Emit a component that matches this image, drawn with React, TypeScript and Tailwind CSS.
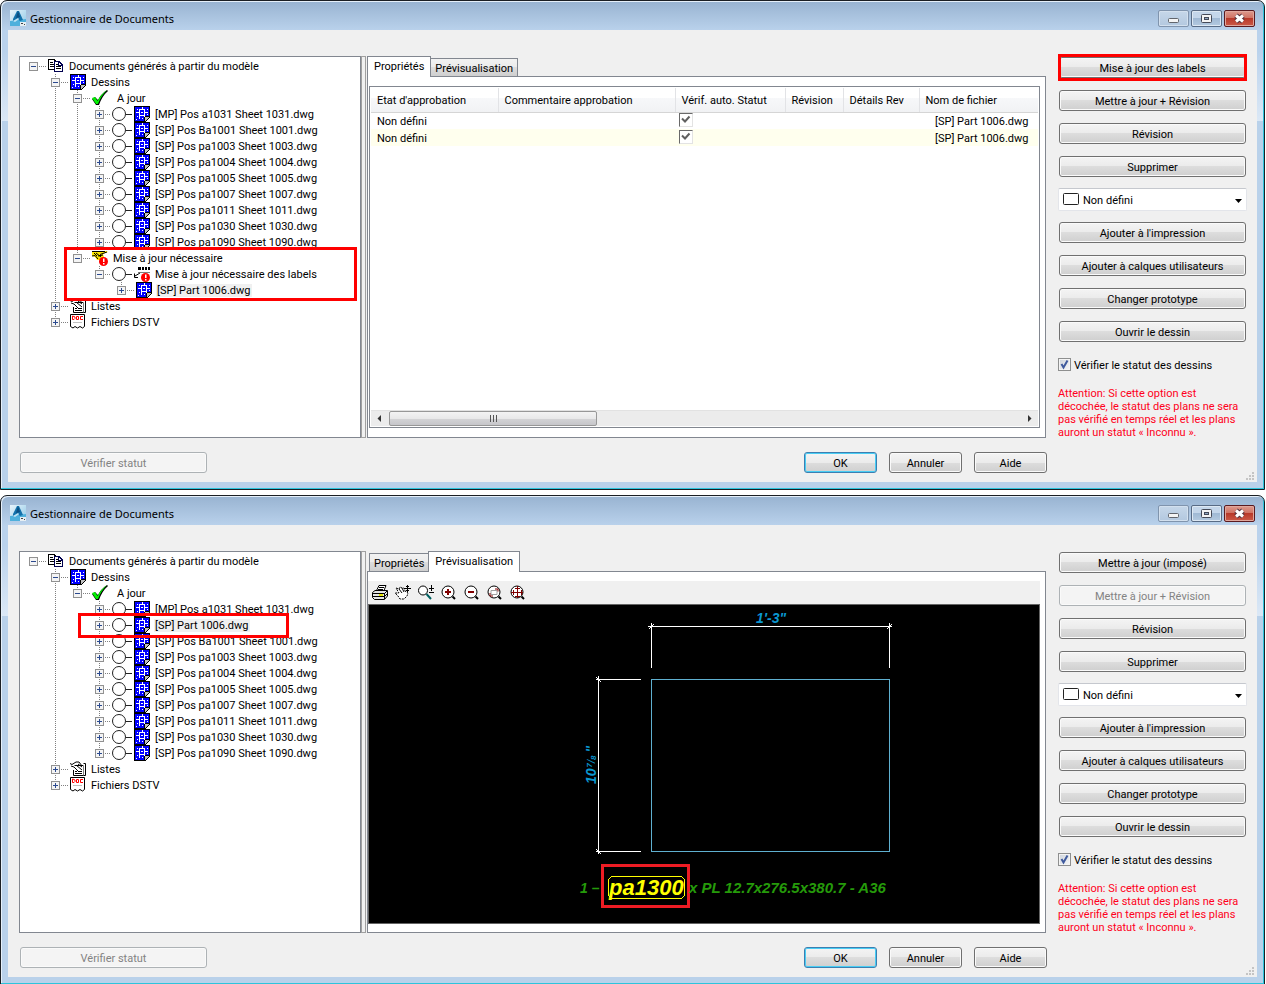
import React, { useState } from "react";

const buttonFace =
  "h-[21px] rounded-[3px] border border-[#707070] bg-[linear-gradient(#f4f4f4,#ebebeb_50%,#dddddd_50%,#cfcfcf)] pt-px text-center leading-[19px] shadow-[inset_0_0_0_1px_#fafafa] disabled:border-[#adb2b5] disabled:bg-none disabled:bg-[#f4f4f4] disabled:text-[#838383]";

/* ---------- icons ---------- */

const AppIcon = () => (
  <svg width="16" height="16" viewBox="0 0 16 16" className="shrink-0">
    <defs>
      <linearGradient id="appBg" x1="0" y1="0" x2="1" y2="1">
        <stop offset="0" stopColor="#e8f4fb" />
        <stop offset="1" stopColor="#8fc8e6" />
      </linearGradient>
    </defs>
    <rect width="16" height="16" fill="url(#appBg)" />
    <path d="M0 11 L16 9 V16 H0Z" fill="#4fb0dc" />
    <path d="M7 1 L9 1 L13 10 L10 11 L8 9 L3 11 L3 9Z" fill="#1272ac" />
    <path d="M8 1 L10 7 L6 8Z" fill="#0b4f82" />
    <path d="M3 11 L8 8 L9 9 L5 12Z" fill="#bfe3f4" />
    <rect x="10" y="12" width="6" height="4" fill="#e6eef3" />
    <path d="M11 13.5h2M14 14.5h1" stroke="#444" />
  </svg>
);

const DwgIcon = () => (
  <svg width="16" height="16" viewBox="0 0 16 16" shapeRendering="crispEdges" className="shrink-0">
    <path d="M0 0H16V11L11 16H0Z" fill="#000" />
    <path d="M1 1H15V10H10V15H1Z" fill="#0000ff" />
    <path d="M5.500 3.500H10.500V9.500H5.500ZM8.500 1V4M5.500 9V13M10.500 9V11M2 6.500H6M10 6.500H14" fill="none" stroke="#fff" />
    <path d="M7 6h2v1H7zM3 3h1v1H3zM13 3h1v1h-1zM3 10h1v1H3zM2 13h1v1H2zM8 12h1v1H8zM13 8h1v1h-1z" fill="#fff" />
    <path d="M11 11H15L11 15Z" fill="#c0c0c0" />
  </svg>
);

const DocsIcon = () => (
  <svg width="16" height="16" viewBox="0 0 16 16" shapeRendering="crispEdges" className="shrink-0">
    <path d="M.5 1.5H6L8.5 4V11.5H.5Z" fill="#fff" stroke="#000" />
    <path d="M2 4.5H5M2 6.5H6M2 8.5H6" stroke="#000" />
    <path d="M6.500 3.500H11L14.500 7V13.500H6.500Z" fill="#fff" stroke="#000050" />
    <path d="M10.500 4V7.500H14" fill="none" stroke="#000050" />
    <path d="M8 6.500H10M8 8.500H13M8 10.500H13" stroke="#000" />
  </svg>
);

const CheckIcon = () => (
  <svg width="20" height="16" viewBox="0 0 20 16" className="shrink-0">
    <path d="M0 9 L3 7 L6 10 Q9 4 15 0 L16 1 Q10 6 7 15 L4 15Z" fill="#000" />
    <path d="M0 8 L3 7 L5.500 11 Q9 4 15 0 Q9 6 6 14 L4 14Z" fill="#00f000" />
  </svg>
);

const NodeIcon = () => (
  <svg width="24" height="16" viewBox="0 0 24 16" className="shrink-0">
    <circle cx="9" cy="8" r="6.500" fill="#fff" stroke="#222" />
    <path d="M16 8.500H22" stroke="#222" />
  </svg>
);

const Alert = () => (
  <>
    <circle cx="11.500" cy="11.500" r="4.500" fill="#ff0000" />
    <path d="M11 8.500H12.500V12H11ZM11 13H12.500V14.500H11Z" fill="#fff" />
  </>
);

const HandAlertIcon = () => (
  <svg width="16" height="16" viewBox="0 0 16 16" className="shrink-0">
    <path d="M0 1H14L16 2L11 4L12 7L8 10H5L3 7L0 6Z" fill="#ffe800" />
    <path d="M0 1.500H13M15 2L8 4.500M0 6L3 5.500L6 9M4 3L9 7M6 6L11 5M2 3L5 6" fill="none" stroke="#000" />
    <Alert />
  </svg>
);

const LabelAlertIcon = () => (
  <svg width="16" height="16" viewBox="0 0 16 16" className="shrink-0">
    <path d="M4 1H7V4H4ZM8 1H10V4H8ZM11 1H13V4H11ZM14 1H16V4H14Z" fill="#000" />
    <path d="M4 6.500H16" stroke="#808080" />
    <path d="M6 7L1 10M0.500 7.500V11.500H4" fill="none" stroke="#000" />
    <Alert />
  </svg>
);

const ListIcon = () => (
  <svg width="16" height="16" viewBox="0 0 16 16" className="shrink-0">
    <path d="M4.500 4.500H13.500V14.500H3.500V9" fill="#fff" stroke="#000" />
    <path d="M13.500 2.500H15.500V14.500H13.500" fill="#fff" stroke="#000" />
    <path d="M0 2.500L2 3.500L6 1H9L12 5M1 5L4 6L9 11M6 4L12 9M8 3L12 6" fill="none" stroke="#000" />
    <path d="M5 10.500H7M5 12.500H12M9 10.500H12" stroke="#000" />
  </svg>
);

const DocIcon = () => (
  <svg width="16" height="16" viewBox="0 0 16 16" className="shrink-0">
    <path d="M.5 .5H14.500V12.500L12.500 14L10 12.500L7.500 14L5 12.500L3 14L.5 12.500Z" fill="#fff" stroke="#000" />
    <path d="M2.500 2V5.500H4L5 4.500V3L4 2.500ZM6.500 2.500H8.500V5.500H6.500ZM13 2.500H10.500V5.500H13" fill="none" stroke="#ff0000" />
    <path d="M3 8.500H12" stroke="#c0c0c0" />
  </svg>
);

const iconMap = {
  docs: DocsIcon,
  dwg: DwgIcon,
  check: CheckIcon,
  hand: HandAlertIcon,
  label: LabelAlertIcon,
  list: ListIcon,
  doc: DocIcon,
};

/* ---------- tree ---------- */

interface TreeItem {
  label: string;
  icon: keyof typeof iconMap;
  // one character per ancestor level: "|" draws the guide, "." leaves it empty
  guides: string;
  open?: boolean;
  node?: boolean;
  last?: boolean;
  selected?: boolean;
}

const TreeRow: React.FC<{ item: TreeItem }> = ({ item }) => {
  const Icon = iconMap[item.icon];
  const root = item.guides.length === 0;

  return (
    <li className="flex h-4 items-center whitespace-nowrap">
      {item.guides.split("").map((g, i) => (
        <svg key={i} width="22" height="16" shapeRendering="crispEdges" className="shrink-0">
          {g === "|" && <path d="M11.500 0V16" stroke="#808080" strokeDasharray="1 1" />}
        </svg>
      ))}
      <button aria-label={item.label} className={item.node ? "w-[22px] shrink-0" : "w-[26px] shrink-0"}>
        <svg width="26" height="16" shapeRendering="crispEdges" className="max-w-none">
          {!root && <path d={item.last ? "M11.500 0V8" : "M11.500 0V16"} stroke="#808080" strokeDasharray="1 1" />}
          <path d={item.node ? "M17 8.500H23" : "M17 8.500H25"} stroke="#808080" strokeDasharray="1 1" />
          <rect x="7.500" y="4.500" width="8" height="8" fill="#f4f4f4" stroke="#919191" />
          <path d={item.open ? "M9 8.500H14" : "M9 8.500H14M11.500 6V11"} stroke="#2b4a8f" />
        </svg>
      </button>
      {item.node && <NodeIcon />}
      <Icon />
      <span className={item.selected ? "ml-1 bg-[#f0f0f0] px-px" : "ml-1 px-px"}>{item.label}</span>
    </li>
  );
};

const head: TreeItem[] = [
  { label: "Documents générés à partir du modèle", icon: "docs", guides: "", open: true },
  { label: "Dessins", icon: "dwg", guides: ".", open: true },
];

const tail: TreeItem[] = [
  { label: "Listes", icon: "list", guides: "." },
  { label: "Fichiers DSTV", icon: "doc", guides: ".", last: true },
];

const firstSheet = "[MP] Pos a1031 Sheet 1031.dwg";
const sheets = [
  "[SP] Pos Ba1001 Sheet 1001.dwg",
  "[SP] Pos pa1003 Sheet 1003.dwg",
  "[SP] Pos pa1004 Sheet 1004.dwg",
  "[SP] Pos pa1005 Sheet 1005.dwg",
  "[SP] Pos pa1007 Sheet 1007.dwg",
  "[SP] Pos pa1011 Sheet 1011.dwg",
  "[SP] Pos pa1030 Sheet 1030.dwg",
  "[SP] Pos pa1090 Sheet 1090.dwg",
];

const sheetItems = (labels: string[], guides: string): TreeItem[] =>
  labels.map((label, i) => ({
    label,
    icon: "dwg",
    guides,
    node: true,
    last: i === labels.length - 1,
    selected: label === "[SP] Part 1006.dwg",
  }));

const treeBefore: TreeItem[] = [
  ...head,
  { label: "A jour", icon: "check", guides: ".|", open: true },
  ...sheetItems([firstSheet, ...sheets], ".||"),
  { label: "Mise à jour nécessaire", icon: "hand", guides: ".|", open: true, last: true },
  { label: "Mise à jour nécessaire des labels", icon: "label", guides: ".|.", open: true, node: true, last: true },
  { label: "[SP] Part 1006.dwg", icon: "dwg", guides: ".|..", last: true, selected: true },
  ...tail,
];

const treeAfter: TreeItem[] = [
  ...head,
  { label: "A jour", icon: "check", guides: ".|", open: true, last: true },
  ...sheetItems([firstSheet, "[SP] Part 1006.dwg", ...sheets], ".|."),
  ...tail,
];

/* ---------- properties tab ---------- */

const GridCheck = ({ label }: { label: string }) => (
  <span className="relative block size-[14px]">
    <input
      type="checkbox"
      defaultChecked
      aria-label={label}
      className="peer block size-[14px] appearance-none border border-[#e3e3e3] border-t-[#696969] border-l-[#696969] bg-white"
    />
    <svg viewBox="0 0 14 14" className="pointer-events-none absolute inset-0 hidden peer-checked:block">
      <path d="M3 5.500L6 8.500L10.500 3.500" fill="none" stroke="#606060" strokeWidth="2" />
    </svg>
  </span>
);

const columns = ["Etat d'approbation", "Commentaire approbation", "Vérif. auto. Statut", "Révision", "Détails Rev", "Nom de fichier"];

const PropertiesTab = () => (
  <div className="mt-[9px] mr-[5px] mb-[9px] ml-px flex flex-1 flex-col border border-[#828790] p-px">
    <table className="w-full table-fixed border-collapse">
      <colgroup>
        <col className="w-[127px]" />
        <col className="w-[177px]" />
        <col className="w-[110px]" />
        <col className="w-[58px]" />
        <col className="w-[76px]" />
        <col />
      </colgroup>
      <thead>
        <tr className="h-6 bg-[linear-gradient(#ffffff_40%,#f7f8fa_40%,#f1f2f4)]">
          {columns.map((c) => (
            <th
              key={c}
              className="border-r border-b border-r-[#e2e3e6] border-b-[#d5d5d5] p-0 pt-[2px] pl-[6px] text-left font-normal whitespace-nowrap last:border-r-0"
            >
              {c}
            </th>
          ))}
        </tr>
      </thead>
      <tbody>
        {["Ligne 1", "Ligne 2"].map((row) => (
          <tr key={row} className="h-[17px] even:bg-[#ffffee]">
            <td className="p-0 pt-[2px] pl-[6px]">Non défini</td>
            <td className="p-0"></td>
            <td className="p-0 pb-[2px] pl-1">
              <GridCheck label={row} />
            </td>
            <td className="p-0"></td>
            <td className="p-0"></td>
            <td className="p-0 pt-[2px] pl-4 whitespace-nowrap">[SP] Part 1006.dwg</td>
          </tr>
        ))}
      </tbody>
    </table>
    <div className="mt-auto flex h-4 items-center border-t border-[#e2e2e2] bg-[#ececec]">
      <svg width="18" height="15" className="shrink-0">
        <path d="M10 4V11L6.500 7.500Z" fill="#333" />
      </svg>
      <div className="flex h-[15px] w-[208px] items-center justify-center gap-px rounded-[2px] border border-[#979797] bg-[linear-gradient(#f3f3f3,#e8e8e9_50%,#d4d4d6_50%,#c6c6ca)]">
        <svg width="9" height="7" shapeRendering="crispEdges">
          <path d="M1.500 0V7M4.500 0V7M7.500 0V7" stroke="#555" />
        </svg>
      </div>
      <svg width="18" height="15" className="ml-auto shrink-0">
        <path d="M8 4V11L11.500 7.500Z" fill="#333" />
      </svg>
    </div>
  </div>
);

/* ---------- preview tab ---------- */

const Lens = ({ children }: { children?: React.ReactNode }) => (
  <>
    <circle cx="7" cy="7" r="6" fill="#fff" stroke="#000" />
    <path d="M11.500 11.500L14 14" stroke="#000" strokeWidth="2" />
    {children}
  </>
);

const tools: { name: string; art: React.ReactNode }[] = [
  {
    name: "Imprimer",
    art: (
      <>
        <path d="M4.500 5.500L7 .5H14L12 5.500" fill="#fff" stroke="#000" />
        <path d="M7 2.500H12M6 4.500H11" stroke="#000" />
        <path d="M.5 7.500L3 5.500H15.500V11L12.500 14.500H2.500L.5 12.500Z" fill="#e4e4e4" stroke="#000" />
        <path d="M1 8.500H12.500L15 6M1 11.500H12.500L15 9M12.500 8V14" fill="none" stroke="#000" />
        <path d="M7 10H11" stroke="#e8e800" strokeWidth="2" />
      </>
    ),
  },
  {
    name: "Panoramique",
    art: (
      <>
        <path d="M1 3L4 4L5 2L7 3L9 3L10 6L13 8L12 11L9 14H5L3 11L0 8L4 8Z" fill="#fff" stroke="#000" strokeDasharray="2 1" />
        <path d="M4 4L7 8M7 3L9 7" stroke="#000" />
        <path d="M12.500 0V7M9 3.500H16M11 1.500H14M11 5.500H14" stroke="#000" />
      </>
    ),
  },
  {
    name: "Zoom temps réel",
    art: (
      <>
        <circle cx="5" cy="5.500" r="4.500" fill="#fff" stroke="#000" />
        <path d="M8.500 9L13 14" stroke="#006060" strokeWidth="2" />
        <path d="M13.500 0V6M11 3.500H16M11 7.500H16" stroke="#000" />
      </>
    ),
  },
  { name: "Zoom avant", art: <Lens><path d="M7 4V10M4 7H10" stroke="#800000" strokeWidth="2" /></Lens> },
  { name: "Zoom arrière", art: <Lens><path d="M4 7H10" stroke="#800000" strokeWidth="2" /></Lens> },
  {
    name: "Zoom fenêtre",
    art: (
      <Lens>
        <path d="M4 5.500H10V9.500H4Z" fill="none" stroke="#a0a0a0" />
        <path d="M8 4H11V6.500M3 8V11H6" fill="none" stroke="#800000" />
      </Lens>
    ),
  },
  {
    name: "Zoom étendu",
    art: (
      <Lens>
        <path d="M7.500 1V13M1 7.500H13M5 3.500H10M5 11.500H10M3.500 5V10M11.500 5V10" stroke="#800000" shapeRendering="crispEdges" />
      </Lens>
    ),
  },
];

const PreviewTab = () => (
  <div className="mt-[9px] mr-[5px] mb-2 flex flex-1 flex-col">
    <div className="flex h-[23px] items-center gap-[7px] bg-[#f0f0f0] pt-px pl-1">
      {tools.map((t) => (
        <button key={t.name} aria-label={t.name}>
          <svg width="16" height="16" viewBox="0 0 16 16">
            {t.art}
          </svg>
        </button>
      ))}
    </div>
    <div className="flex flex-1 justify-center overflow-hidden border border-[#646464] bg-black">
      <svg
        width="670"
        height="317"
        viewBox="369 605 670 317"
        fill="none"
        className="shrink-0 font-['Liberation_Sans'] font-bold italic"
      >
        <g shapeRendering="crispEdges">
          <rect x="651.500" y="679.500" width="238" height="172" stroke="#5fb0d0" />
          <path d="M648 626.500H892M651.500 623V668M889.500 623V668M649 629L654 624M887 629L892 624" stroke="#fff" />
          <path d="M598.500 676V854M596 679.500H641M596 851.500H641M596 677L601 682M596 849L601 854" stroke="#fff" />
          <path d="M611.500 876.500H681.500L684.500 879.500V895.500L681.500 898.500H611.500L608.500 895.500V879.500Z" stroke="#ffff00" />
          <rect x="602.500" y="865.500" width="86" height="41" stroke="#ed1c24" strokeWidth="3" />
        </g>
        <text x="756" y="623" fontSize="14" fill="#0a97d0">1'-3"</text>
        <text transform="translate(596 784) rotate(-90)" fontSize="14" fill="#0a97d0">
          10
          <tspan dx="1" dy="-4" fontSize="8">7</tspan>
          <tspan dy="3" fontSize="11" fontWeight="400">/</tspan>
          <tspan dy="1" fontSize="8">8</tspan>
          <tspan dx="3" fontSize="14">"</tspan>
        </text>
        <text x="580" y="893" fontSize="14" fill="#259a0a">1 –</text>
        <text x="609" y="895" fontSize="22" fill="#ffff00">pa1300</text>
        <text x="689" y="893" fontSize="15" fill="#259a0a">x PL 12.7x276.5x380.7 - A36</text>
      </svg>
    </div>
  </div>
);

/* ---------- window ---------- */

type TabName = "Propriétés" | "Prévisualisation";
const tabNames: TabName[] = ["Propriétés", "Prévisualisation"];

interface DocumentManagerProps {
  id: string;
  tree: TreeItem[];
  initialTab: TabName;
  updateLabel: string;
  highlightUpdate?: boolean;
  revisionDisabled?: boolean;
  treeMark: string;
}

const DocumentManager: React.FC<DocumentManagerProps> = ({
  id,
  tree,
  initialTab,
  updateLabel,
  highlightUpdate,
  revisionDisabled,
  treeMark,
}) => {
  const [tab, setTab] = useState<TabName>(initialTab);

  return (
    <section className="rounded-t-[7px] border border-[#1b1f24] bg-[linear-gradient(#98b3d1,#bad2ec_30px,#bad2ec_50px,#dbe8f6_120px,#b9d1ea_120px)] px-[7px] pb-[7px] shadow-[inset_-1px_-1px_0_#2cc4dc,inset_1px_1px_0_#e6f0fa]">
      <header className="flex h-[29px] items-center gap-1 pt-[5px] pr-[2px] pl-[2px]">
        <AppIcon />
        <h1 className="font-['Noto_Sans'] text-[11px]">Gestionnaire de Documents</h1>
        <div className="ml-auto flex gap-[2px]">
          <button aria-label="Réduire" className="h-[17px] w-[31px] rounded-[2px] border border-[#8094ad] bg-[linear-gradient(#c6d7e9,#b3c8df)] shadow-[inset_0_0_0_1px_#d3e0ee]">
            <svg width="29" height="15">
              <rect x="9.500" y="7.500" width="10" height="4" rx="1" fill="#f4f4f4" stroke="#61656c" />
            </svg>
          </button>
          <button aria-label="Agrandir" className="h-[17px] w-[31px] rounded-[2px] border border-[#586b85] bg-[linear-gradient(#c4d6ea_50%,#a0b9d4_50%,#b4cae0)] shadow-[inset_0_0_0_1px_#dde8f3]">
            <svg width="29" height="15">
              <rect x="9.500" y="3.500" width="10" height="8" rx="1" fill="#f4f4f4" stroke="#454a58" />
              <rect x="12.500" y="6.500" width="4" height="2" fill="#8fa6c2" stroke="#454a58" />
            </svg>
          </button>
          <button aria-label="Fermer" className="h-[17px] w-[31px] rounded-[2px] border border-[#5a1a20] bg-[linear-gradient(#dd9a8e,#cf6f60_50%,#b8392a_50%,#cc5a48)] shadow-[inset_0_0_0_1px_#e0a79d]">
            <svg width="29" height="15">
              <path d="M11 4.500L18 10.500M18 4.500L11 10.500" stroke="#53303a" strokeWidth="5" />
              <path d="M11 4.500L18 10.500M18 4.500L11 10.500" stroke="#fff" strokeWidth="3" />
            </svg>
          </button>
        </div>
      </header>

      <div className="relative bg-[#f0f0f0] pt-[26px] pr-[11px] pb-[9px] pl-[11px]">
        <div className="flex h-[382px]">
          <nav className="relative w-[342px] shrink-0 border border-[#828790] bg-white pt-px pl-[2px]">
            <ul>
              {tree.map((item) => (
                <TreeRow key={item.label} item={item} />
              ))}
            </ul>
            <div className={treeMark}></div>
          </nav>
          <div className="mr-px w-[5px] shrink-0 border border-[#a0a0a0] bg-[#f0f0f0]"></div>

          <main className="flex min-w-0 flex-1 flex-col">
            <div role="tablist" className="flex h-5 items-end">
              {tabNames.map((name) => (
                <button
                  key={name}
                  role="tab"
                  aria-selected={tab === name}
                  onClick={() => setTab(name)}
                  className={
                    tab === name
                      ? "z-10 -mb-px h-[21px] border border-b-0 border-[#828790] bg-white px-[6px] pb-[2px] not-first:-ml-px"
                      : "h-[18px] border border-b-0 border-[#828790] bg-[linear-gradient(#f2f2f2,#ebebeb_50%,#dddddd_50%,#cfcfcf)] px-1 pt-[2px] not-first:-ml-px first:ml-[2px]"
                  }
                >
                  {name}
                </button>
              ))}
            </div>
            <div className="flex flex-1 flex-col border border-[#828790] bg-white">
              {tab === "Propriétés" ? <PropertiesTab /> : <PreviewTab />}
            </div>
          </main>

          <aside className="ml-[13px] flex w-[187px] shrink-0 flex-col gap-3 pt-px">
            <div className="relative flex flex-col">
              <button className={buttonFace}>{updateLabel}</button>
              {highlightUpdate && (
                <div className="pointer-events-none absolute -inset-x-px -inset-y-[3px] border-3 border-[#ff0000]"></div>
              )}
            </div>
            <button className={buttonFace} disabled={revisionDisabled}>
              Mettre à jour + Révision
            </button>
            <button className={buttonFace}>Révision</button>
            <button className={buttonFace}>Supprimer</button>
            <div className="relative -mx-px -my-px">
              <select
                aria-label="Etat d'approbation"
                className="block h-[23px] w-full appearance-none rounded-[2px] border border-[#e3e5ea] border-t-[#c5c8ce] bg-white pt-px pl-[24px]"
              >
                <option>Non défini</option>
              </select>
              <svg width="16" height="12" className="pointer-events-none absolute top-[5px] left-[5px]">
                <rect x=".5" y=".5" width="15" height="11" rx="1" fill="#fff" stroke="#222" />
              </svg>
              <svg width="7" height="4" className="pointer-events-none absolute top-[11px] right-[5px]">
                <path d="M0 0H7L3.500 4Z" fill="#000" />
              </svg>
            </div>
            <button className={buttonFace}>Ajouter à l'impression</button>
            <button className={buttonFace}>Ajouter à calques utilisateurs</button>
            <button className={buttonFace}>Changer prototype</button>
            <button className={buttonFace}>Ouvrir le dessin</button>
            <div className="-ml-px pt-1">
              <div className="relative flex h-[13px] items-center gap-[3px]">
                <input
                  id={`${id}-check`}
                  type="checkbox"
                  defaultChecked
                  className="peer size-[13px] appearance-none border border-[#8e8f8f] bg-[linear-gradient(135deg,#cdd3db,#f8f8f8)] shadow-[inset_0_0_0_1px_#f4f4f4]"
                />
                <svg width="13" height="13" className="pointer-events-none absolute left-0 hidden peer-checked:block">
                  <path d="M3.500 6L5.500 9.500L9.500 2.500" fill="none" stroke="#3f5a9d" strokeWidth="2" />
                </svg>
                <label htmlFor={`${id}-check`} className="pt-px">
                  Vérifier le statut des dessins
                </label>
              </div>
              <p className="mt-4 leading-[13px] text-[#ff0020]">
                Attention: Si cette option est
                <br />
                décochée, le statut des plans ne sera
                <br />
                pas vérifié en temps réel et les plans
                <br />
                auront un statut « Inconnu ».
              </p>
            </div>
          </aside>
        </div>

        <footer className="mt-[14px] flex gap-3 pr-[199px] pl-px">
          <button disabled className={`${buttonFace} mr-auto w-[187px]`}>
            Vérifier statut
          </button>
          <button className="h-[21px] w-[73px] rounded-[3px] border border-[#3c7fb1] bg-[linear-gradient(#f4f4f4,#ebebeb_50%,#dddddd_50%,#cfcfcf)] pt-px leading-[19px] shadow-[inset_0_0_0_1px_#48cdf4]">
            OK
          </button>
          <button className={`${buttonFace} w-[73px]`}>Annuler</button>
          <button className={`${buttonFace} w-[73px]`}>Aide</button>
        </footer>
        <svg width="8" height="8" className="absolute right-[3px] bottom-[2px]">
          <path d="M6 0h2v2H6zM3 3h2v2H3zM6 3h2v2H6zM0 6h2v2H0zM3 6h2v2H3zM6 6h2v2H6z" fill="#c4c4c4" />
        </svg>
      </div>
    </section>
  );
};

const App: React.FC = () => {
  return (
    <div className="flex h-screen flex-col gap-[5px] overflow-hidden bg-white pr-px font-[Roboto,sans-serif] text-[11px] leading-[13px] text-black *:shrink-0">
      <DocumentManager
        id="before"
        tree={treeBefore}
        initialTab="Propriétés"
        updateLabel="Mise à jour des labels"
        highlightUpdate
        treeMark="pointer-events-none absolute top-[190px] left-[44px] h-[54px] w-[293px] border-3 border-[#ff0000]"
      />
      <DocumentManager
        id="after"
        tree={treeAfter}
        initialTab="Prévisualisation"
        updateLabel="Mettre à jour (imposé)"
        revisionDisabled
        treeMark="pointer-events-none absolute top-[61px] left-[58px] h-[25px] w-[211px] border-3 border-[#ff0000]"
      />
    </div>
  );
};

export default App;
